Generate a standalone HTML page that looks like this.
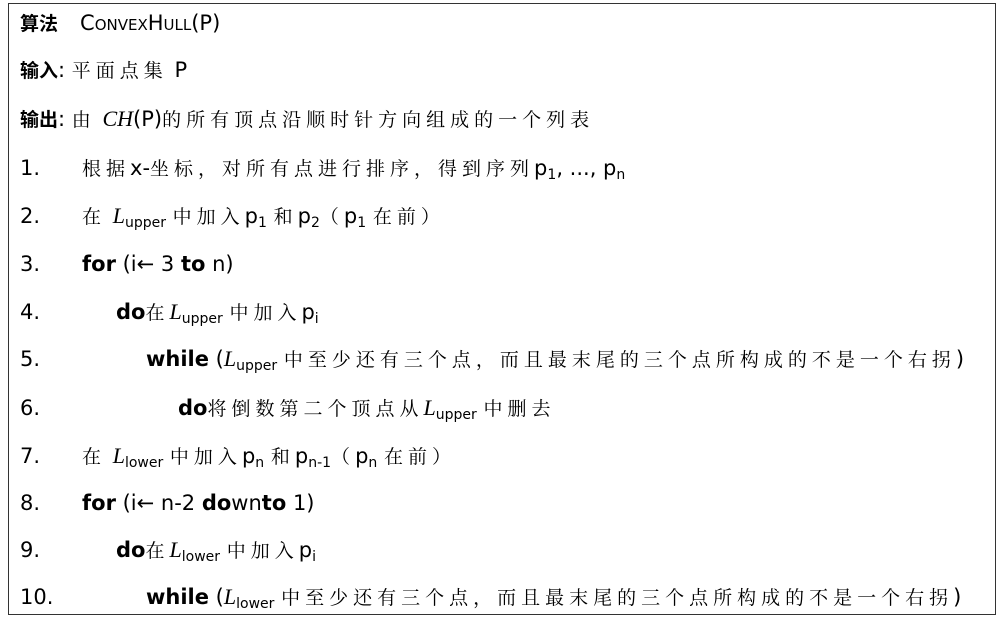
<!DOCTYPE html>
<html><head><meta charset="utf-8"><style>
body{margin:0;width:1004px;height:620px;background:#fff;overflow:hidden;font-family:"DejaVu Sans","Noto Sans CJK SC",sans-serif;color:#000}
.box{position:absolute;left:8px;top:3px;width:988px;height:612px;border:1.5px solid #333;box-sizing:border-box}
.l{position:absolute;font-size:21px;white-space:nowrap;line-height:24px}
.n{position:absolute;left:20px;font-size:21px;line-height:24px}
.c{font-family:"Noto Serif CJK SC","Noto Sans CJK SC",sans-serif;letter-spacing:5px;font-size:19px}
b{font-weight:bold}
.cb{font-family:"Noto Sans CJK SC",sans-serif;font-weight:bold;font-size:19px}
sub{font-size:14px;vertical-align:-4px;line-height:0}
i.u{font-family:"Liberation Serif",serif;font-style:italic;font-size:22px}
.sc{font-size:15px}
</style></head><body>
<div class="box"></div>
<div class="l" style="left:20px;top:11px"><span class="cb">算法</span><span style="display:inline-block;width:22px"></span>C<span class="sc">ONVEX</span>H<span class="sc">ULL</span>(P)</div>
<div class="l" style="left:20px;top:58px"><span class="cb">输入</span>: <span class="c">平面点集</span> P</div>
<div class="l" style="left:20px;top:107px"><span class="cb">输出</span>: <span class="c">由</span> <i class="u">CH</i>(P)<span class="c">的所有顶点沿顺时针方向组成的一个列表</span></div>
<div class="n" style="top:156px">1.</div><div class="l" style="left:82px;top:156px"><span class="c">根据</span>x-<span class="c">坐标，对所有点进行排序，得到序列</span>p<sub>1</sub>, ..., p<sub>n</sub></div>
<div class="n" style="top:204px">2.</div><div class="l" style="left:82px;top:204px"><span class="c">在</span> <i class="u">L</i><sub>upper</sub> <span class="c">中加入</span>p<sub>1</sub> <span class="c">和</span>p<sub>2</sub><span class="c">（</span>p<sub>1</sub> <span class="c">在前）</span></div>
<div class="n" style="top:252px">3.</div><div class="l" style="left:82px;top:252px"><b>for</b> (i← 3 <b>to</b> n)</div>
<div class="n" style="top:300px">4.</div><div class="l" style="left:116px;top:300px"><b>do</b><span class="c">在</span><i class="u">L</i><sub>upper</sub> <span class="c">中加入</span>p<sub>i</sub></div>
<div class="n" style="top:347px">5.</div><div class="l" style="left:146px;top:347px"><b>while</b> (<i class="u">L</i><sub>upper</sub> <span class="c">中至少还有三个点，而且最末尾的三个点所构成的不是一个右拐</span>)</div>
<div class="n" style="top:396px">6.</div><div class="l" style="left:178px;top:396px"><b>do</b><span class="c">将倒数第二个顶点从</span><i class="u">L</i><sub>upper</sub> <span class="c">中删去</span></div>
<div class="n" style="top:444px">7.</div><div class="l" style="left:82px;top:444px"><span class="c">在</span> <i class="u">L</i><sub>lower</sub> <span class="c">中加入</span>p<sub>n</sub> <span class="c">和</span>p<sub>n-1</sub><span class="c">（</span>p<sub>n</sub> <span class="c">在前）</span></div>
<div class="n" style="top:491px">8.</div><div class="l" style="left:82px;top:491px"><b>for</b> (i← n-2 <b>do</b>wn<b>to</b> 1)</div>
<div class="n" style="top:538px">9.</div><div class="l" style="left:116px;top:538px"><b>do</b><span class="c">在</span><i class="u">L</i><sub>lower</sub> <span class="c">中加入</span>p<sub>i</sub></div>
<div class="n" style="top:585px">10.</div><div class="l" style="left:146px;top:585px"><b>while</b> (<i class="u">L</i><sub>lower</sub> <span class="c">中至少还有三个点，而且最末尾的三个点所构成的不是一个右拐</span>)</div>
</body></html>
